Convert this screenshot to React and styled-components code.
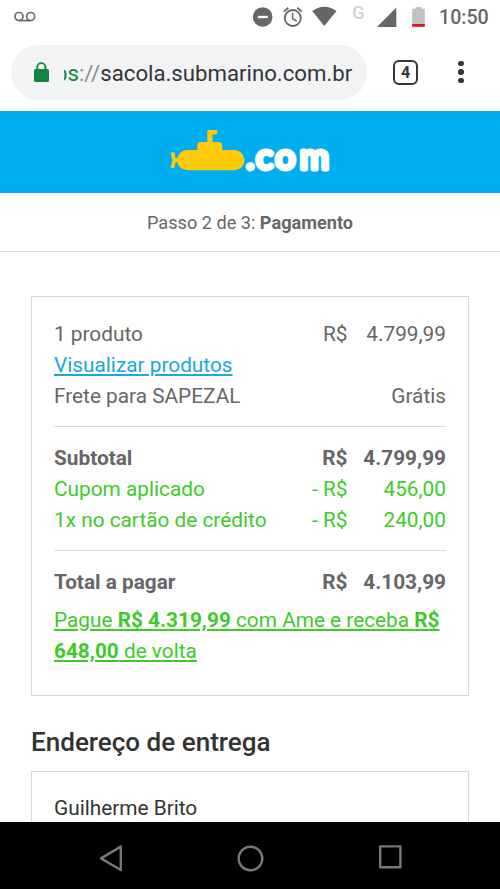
import React, { Component } from 'react';
import styled, { createGlobalStyle } from 'styled-components';

const items = [
  { label: '1 produto', currency: 'R$', value: '4.799,99' },
  { label: 'Visualizar produtos', link: true },
  { label: 'Frete para SAPEZAL', value: 'Grátis' },
];

const subtotal = [
  { label: 'Subtotal', currency: 'R$', value: '4.799,99', bold: true },
  { label: 'Cupom aplicado', currency: '- R$', value: '456,00', green: true },
  { label: '1x no cartão de crédito', currency: '- R$', value: '240,00', green: true },
];

const total = [
  { label: 'Total a pagar', currency: 'R$', value: '4.103,99', bold: true },
];

const VoicemailIcon = () => (
  <svg width="22" height="12" viewBox="0 0 22 12" fill="none" stroke="#6a6a6a" strokeWidth="1.7">
    <circle cx="5" cy="5.5" r="4" />
    <circle cx="16.6" cy="5.5" r="4" />
    <path d="M5 9.6h11.6" />
  </svg>
);

const StatusIcons = () => (
  <svg width="178" height="34" viewBox="252 0 178 34">
    <circle cx="262.7" cy="17" r="9.8" fill="#666" />
    <path d="M257.8 17h10" stroke="#fff" strokeWidth="2.3" />
    <g fill="none" stroke="#666" strokeWidth="1.8">
      <circle cx="292.8" cy="18" r="8" />
      <path d="M292.6 12.8v5.8l4 2.4" strokeWidth="1.5" />
      <path d="M283.8 11.6l4.6-3.9M301.8 11.6l-4.6-3.9" />
    </g>
    <path d="M312.2 11Q324.3 2.5 336.5 11L324.3 26z" fill="#666" />
    <path d="M377 27L396.3 7.6V27z" fill="#666" />
    <path d="M412.2 8.8h3.3V6.9h6v1.9h3.3v15.4h-12.6z" fill="#c1c1c1" />
    <path d="M412.2 24h12.6v2.8h-12.6z" fill="#e2121b" />
    <text x="352.2" y="18.6" fill="#d2d2d2" fontSize="18" fontWeight="500" fontFamily="Roboto, sans-serif">G</text>
  </svg>
);

const LockIcon = () => (
  <svg width="17" height="21" viewBox="0 0 17 21">
    <path d="M4.2 8V5.2a4.1 4.1 0 0 1 8.2 0V8" fill="none" stroke="#118644" strokeWidth="1.9" />
    <rect x="1" y="7" width="15" height="13" rx="1.5" fill="#118644" />
  </svg>
);

const Logo = () => (
  <svg width="168" height="46" viewBox="168 128 168 46">
    <g fill="#ffcb08">
      <rect x="177" y="150" width="67.5" height="20.3" rx="10.15" />
      <path d="M197.3 151v-5.5q0-3.5 3.5-3.5h6.5v-10.5q0-1.5 1.5-1.5h6.7q2 0 2 2.2t-2 2.2h-3v7.6h6q3.7 0 3.7 3.7v5.3z" />
      <path d="M170.6 153.2q1.6-1.6 3.8-.6 1.2 1.2.6 3.2l.6 2.4h2.4v4h-2.4l-.6 2.4q.6 2-.6 3.2-2.2 1-3.8-.6l1-3.8 1-3.2-1-3.2z" />
    </g>
    <text
      x="246 256 275.2 299.8"
      y="169"
      fill="#fff"
      stroke="#fff"
      strokeWidth="4.9"
      strokeLinejoin="round"
      strokeLinecap="round"
      fontSize="35.5"
      fontWeight="400"
      fontFamily="Lato, sans-serif"
    >
      .com
    </text>
  </svg>
);

const SystemNav = () => (
  <svg width="500" height="67" viewBox="0 822 500 67" fill="none" stroke="#777" strokeWidth="2.4" strokeLinejoin="round">
    <path d="M120.8 846.6v23.4L101 858.4z" />
    <circle cx="250.5" cy="858.5" r="11.8" />
    <rect x="380.2" y="846.4" width="20.2" height="20.8" />
  </svg>
);

const SummaryRow = ({ item }) => (
  <Row $bold={item.bold} $green={item.green}>
    {item.link ? <ProductsLink href="#">{item.label}</ProductsLink> : <Label>{item.label}</Label>}
    {item.currency && <Currency>{item.currency}</Currency>}
    {item.value && <Amount>{item.value}</Amount>}
  </Row>
);

export default class App extends Component {
  render() {
    return (
      <Screen>
        <GlobalStyle />
        <StatusBar>
          <VoicemailIcon />
          <StatusRight>
            <StatusIcons />
            <Clock>10:50</Clock>
          </StatusRight>
        </StatusBar>

        <Toolbar>
          <AddressBar>
            <LockIcon />
            <Address>
              <Scheme><span>ps</span></Scheme>
              <Slashes>://</Slashes>
              sacola.submarino.com.br
            </Address>
          </AddressBar>
          <TabCount>4</TabCount>
          <MenuDots>
            <i />
            <i />
            <i />
          </MenuDots>
        </Toolbar>

        <Header>
          <Logo />
        </Header>

        <Step>
          Passo 2 de 3:&nbsp;<b>Pagamento</b>
        </Step>

        <Content>
          <Card>
            {items.map((item) => <SummaryRow item={item} key={item.label} />)}
            <Divider />
            {subtotal.map((item) => <SummaryRow item={item} key={item.label} />)}
            <Divider />
            {total.map((item) => <SummaryRow item={item} key={item.label} />)}
            <AmeLink href="#">
              Pague <b>R$ 4.319,99</b> com Ame e receba <b>R$ 648,00</b> de volta
            </AmeLink>
          </Card>

          <Title>Endereço de entrega</Title>
          <AddressCard>Guilherme Brito</AddressCard>
        </Content>

        <NavBar>
          <SystemNav />
        </NavBar>
      </Screen>
    );
  }
}

const GlobalStyle = createGlobalStyle`
  * {
    box-sizing: border-box;
  }

  body {
    margin: 0;
    background: #fff;
    font-family: Roboto, sans-serif;
  }

  svg {
    display: block;
    flex: none;
  }
`;

const Screen = styled.div`
  display: flex;
  flex-direction: column;
  width: 500px;
  height: 889px;
  overflow: hidden;
  background: #fff;
`;

const StatusBar = styled.div`
  display: flex;
  flex: none;
  align-items: center;
  justify-content: space-between;
  height: 34px;
  padding: 0 0 0 14px;
`;

const StatusRight = styled.div`
  display: flex;
  align-items: center;
  width: 248px;
`;

const Clock = styled.span`
  margin-left: 9px;
  color: #666;
  font-size: 19.6px;
  font-weight: 500;
`;

const Toolbar = styled.div`
  display: flex;
  flex: none;
  align-items: center;
  height: 77px;
  padding: 0 0 1px 11px;
`;

const AddressBar = styled.div`
  display: flex;
  align-items: center;
  width: 356px;
  height: 55px;
  padding-left: 22px;
  border-radius: 28px;
  background: #f1f3f4;
`;

const Address = styled.div`
  display: flex;
  margin: 1px 0 0 14px;
  color: #333538;
  font-size: 22.2px;
  line-height: 30px;
  white-space: nowrap;
`;

const Scheme = styled.span`
  display: flex;
  justify-content: flex-end;
  width: 15px;
  overflow: hidden;
  color: #118644;
`;

const Slashes = styled.span`
  color: #8b8d90;
`;

const TabCount = styled.div`
  display: flex;
  align-items: center;
  justify-content: center;
  width: 25px;
  height: 25px;
  margin-left: 26px;
  border: 2.5px solid #333538;
  border-radius: 6px;
  color: #333538;
  font-size: 16px;
  font-weight: 700;
`;

const MenuDots = styled.div`
  display: flex;
  flex-direction: column;
  gap: 3px;
  margin-left: 40px;

  i {
    width: 5.6px;
    height: 5.6px;
    border-radius: 50%;
    background: #333538;
  }
`;

const Header = styled.header`
  display: flex;
  flex: none;
  justify-content: center;
  height: 82px;
  padding: 16px 0 0 4px;
  border-top: 1px solid #2b9cc9;
  background: #00aeef;
`;

const Step = styled.div`
  display: flex;
  flex: none;
  align-items: center;
  justify-content: center;
  height: 59px;
  border-bottom: 1px solid #dedede;
  color: #666;
  font-size: 18.15px;
`;

const Content = styled.main`
  flex: 1;
  min-height: 0;
  padding: 44px 31px 0;
  overflow: hidden;
`;

const Card = styled.section`
  height: 400px;
  padding: 22px 22px 0;
  border: 1px solid #d9d9d9;
  color: #666;
  font-size: 20.8px;
`;

const Row = styled.div`
  display: flex;
  height: 31px;
  color: ${props => (props.$green ? '#3fca2a' : '#666')};
  font-weight: ${props => (props.$bold ? 700 : 400)};
  line-height: 31px;
  white-space: nowrap;
`;

const Label = styled.span`
  flex: 1;
`;

const ProductsLink = styled.a`
  color: #1ba8dd;
  text-decoration: underline;
`;

const Currency = styled.span`
  text-align: right;
`;

const Amount = styled.span`
  width: 98.5px;
  text-align: right;
`;

const Divider = styled.hr`
  height: 1px;
  margin: 14px 0 16px;
  border: 0;
  background: #d9d9d9;
`;

const AmeLink = styled.a`
  display: block;
  margin-top: 7px;
  color: #3fca2a;
  line-height: 31px;
`;

const Title = styled.h2`
  margin: 31px 0 13px;
  color: #333;
  font-size: 26.05px;
  font-weight: 500;
  line-height: 31px;
`;

const AddressCard = styled.section`
  height: 120px;
  padding: 21px 22px;
  border: 1px solid #d9d9d9;
  color: #333;
  font-size: 20.8px;
  line-height: 31px;
`;

const NavBar = styled.nav`
  flex: none;
  height: 67px;
  background: #000;
`;
